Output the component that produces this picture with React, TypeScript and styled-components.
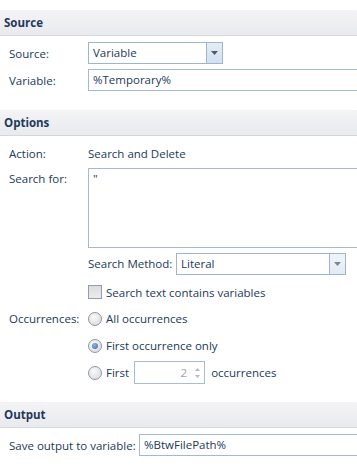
import React from "react";
import styled, { createGlobalStyle } from "styled-components";

const GlobalStyle = createGlobalStyle`
  html, body {
    margin: 0;
    padding: 0;
    background: #ffffff;
    overflow: hidden;
  }
  body {
    font-family: "Segoe UI", "Open Sans", "Noto Sans", sans-serif;
    font-size: 11.5px;
    color: #22395a;
  }
`;

const Page = styled.div`
  width: 357px;
  height: 472px;
  overflow: hidden;
  padding-top: 10px;
  box-sizing: border-box;
`;

const Header = styled.div`
  height: 25px;
  display: flex;
  align-items: center;
  padding-left: 4px;
  font-weight: 700;
  font-size: 11.5px;
  color: #1e395b;
  background: linear-gradient(#f4f4f6, #e9eaee);
  border-bottom: 1px solid #d6d7db;
`;

const Body = styled.div<{ $bottom: number }>`
  display: flex;
  flex-direction: column;
  padding: 6px 0 ${({ $bottom }) => $bottom}px 9px;
`;

const Row = styled.div<{ $h?: number; $mt?: number }>`
  display: flex;
  align-items: center;
  min-height: ${({ $h }) => $h ?? 22}px;
  margin-top: ${({ $mt }) => $mt ?? 0}px;
`;

const TopRow = styled(Row)`
  align-items: flex-start;
`;

const Label = styled.div<{ $w?: number; $lh?: number }>`
  width: ${({ $w }) => $w ?? 79}px;
  flex: none;
  white-space: nowrap;
  line-height: ${({ $lh }) => ($lh ? `${$lh}px` : "normal")};
`;

const Combo = styled.div<{ $w: number; $btn: string }>`
  width: ${({ $w }) => $w}px;
  height: 22px;
  box-sizing: border-box;
  border: 1px solid #9db4d2;
  display: flex;
  background: #fff;
  flex: none;

  span {
    flex: 1;
    padding-left: 4px;
    line-height: 20px;
  }
  i {
    width: 15px;
    border-left: 1px solid #9db4d2;
    background: ${({ $btn }) => $btn};
    display: flex;
    align-items: center;
    justify-content: center;
  }
`;

const TextBox = styled.div<{ $h?: number }>`
  flex: none;
  width: 400px;
  height: ${({ $h }) => $h ?? 22}px;
  box-sizing: border-box;
  border: 1px solid #a2b8d3;
  padding: ${({ $h }) => ($h ? "2px 4px" : "0 4px")};
  line-height: ${({ $h }) => ($h ? "16px" : "20px")};
  background: #fff;
`;

const Indent = styled.div`
  padding-left: 79px;
  display: flex;
  flex-direction: column;
`;

const Check = styled.span`
  width: 12px;
  height: 12px;
  border: 1px solid #8f9eb5;
  background: linear-gradient(#dcdcdc, #ececec);
  margin-right: 4px;
  flex: none;
`;

const Radio = styled.span<{ $on?: boolean }>`
  width: 12px;
  height: 12px;
  border-radius: 50%;
  border: 1px solid #8c97a8;
  background: radial-gradient(circle at 40% 35%, #fafafa, #d6d6d6);
  margin-right: 4px;
  flex: none;
  display: flex;
  align-items: center;
  justify-content: center;

  &::after {
    content: "";
    display: ${({ $on }) => ($on ? "block" : "none")};
    width: 6px;
    height: 6px;
    border-radius: 50%;
    background: radial-gradient(circle at 40% 35%, #8fb4e0, #3569a8);
  }
`;

const OptionList = styled.div`
  display: flex;
  flex-direction: column;
`;

const Option = styled.div`
  display: flex;
  align-items: center;
  height: 27px;
`;

const Spin = styled.div`
  width: 71px;
  height: 23px;
  box-sizing: border-box;
  border: 1px solid #a9bcd5;
  margin: 0 6px 0 5px;
  display: flex;
  align-items: center;
  color: #a0a4aa;

  span {
    flex: 1;
    text-align: right;
    padding-right: 4px;
  }
  i {
    width: 13px;
    display: flex;
    flex-direction: column;
    align-items: center;
    gap: 4px;
  }
`;

const Arrow = ({ color }: { color: string }) => (
  <svg width="7" height="4" viewBox="0 0 7 4">
    <path d="M0 0h7L3.5 4z" fill={color} />
  </svg>
);

const SpinArrow = ({ up }: { up?: boolean }) => (
  <svg width="5" height="3" viewBox="0 0 5 3">
    <path d={up ? "M0 3h5L2.5 0z" : "M0 0h5L2.5 3z"} fill="#b4b8be" />
  </svg>
);

const App = () => {
  return (
    <Page>
      <GlobalStyle />
      <Header>Source</Header>
      <Body $bottom={19}>
        <Row>
          <Label>Source:</Label>
          <Combo $w={135} $btn="linear-gradient(#e4ecf7, #d3e0f1)">
            <span>Variable</span>
            <i>
              <Arrow color="#4d5a6e" />
            </i>
          </Combo>
        </Row>
        <Row $mt={5}>
          <Label>Variable:</Label>
          <TextBox>%Temporary%</TextBox>
        </Row>
      </Body>

      <Header>Options</Header>
      <Body $bottom={16}>
        <Row>
          <Label>Action:</Label>
          <span>Search and Delete</span>
        </Row>
        <TopRow $mt={4}>
          <Label $lh={22}>Search for:</Label>
          <TextBox $h={80}>"</TextBox>
        </TopRow>
        <Indent>
          <Row $h={23} $mt={4}>
            <Label $w={88}>Search Method:</Label>
            <Combo $w={170} $btn="linear-gradient(#f1f5fa, #e3eaf4)">
              <span>Literal</span>
              <i>
                <Arrow color="#7a8597" />
              </i>
            </Combo>
          </Row>
          <Row $mt={6}>
            <Check />
            <span>Search text contains variables</span>
          </Row>
        </Indent>
        <TopRow $mt={2}>
          <Label $lh={27}>Occurrences:</Label>
          <OptionList>
            <Option>
              <Radio />
              All occurrences
            </Option>
            <Option>
              <Radio $on />
              First occurrence only
            </Option>
            <Option>
              <Radio />
              First
              <Spin>
                <span>2</span>
                <i>
                  <SpinArrow up />
                  <SpinArrow />
                </i>
              </Spin>
              occurrences
            </Option>
          </OptionList>
        </TopRow>
      </Body>

      <Header>Output</Header>
      <Body $bottom={10}>
        <Row>
          <Label $w={130}>Save output to variable:</Label>
          <TextBox>%BtwFilePath%</TextBox>
        </Row>
      </Body>
    </Page>
  );
};

export default App;
